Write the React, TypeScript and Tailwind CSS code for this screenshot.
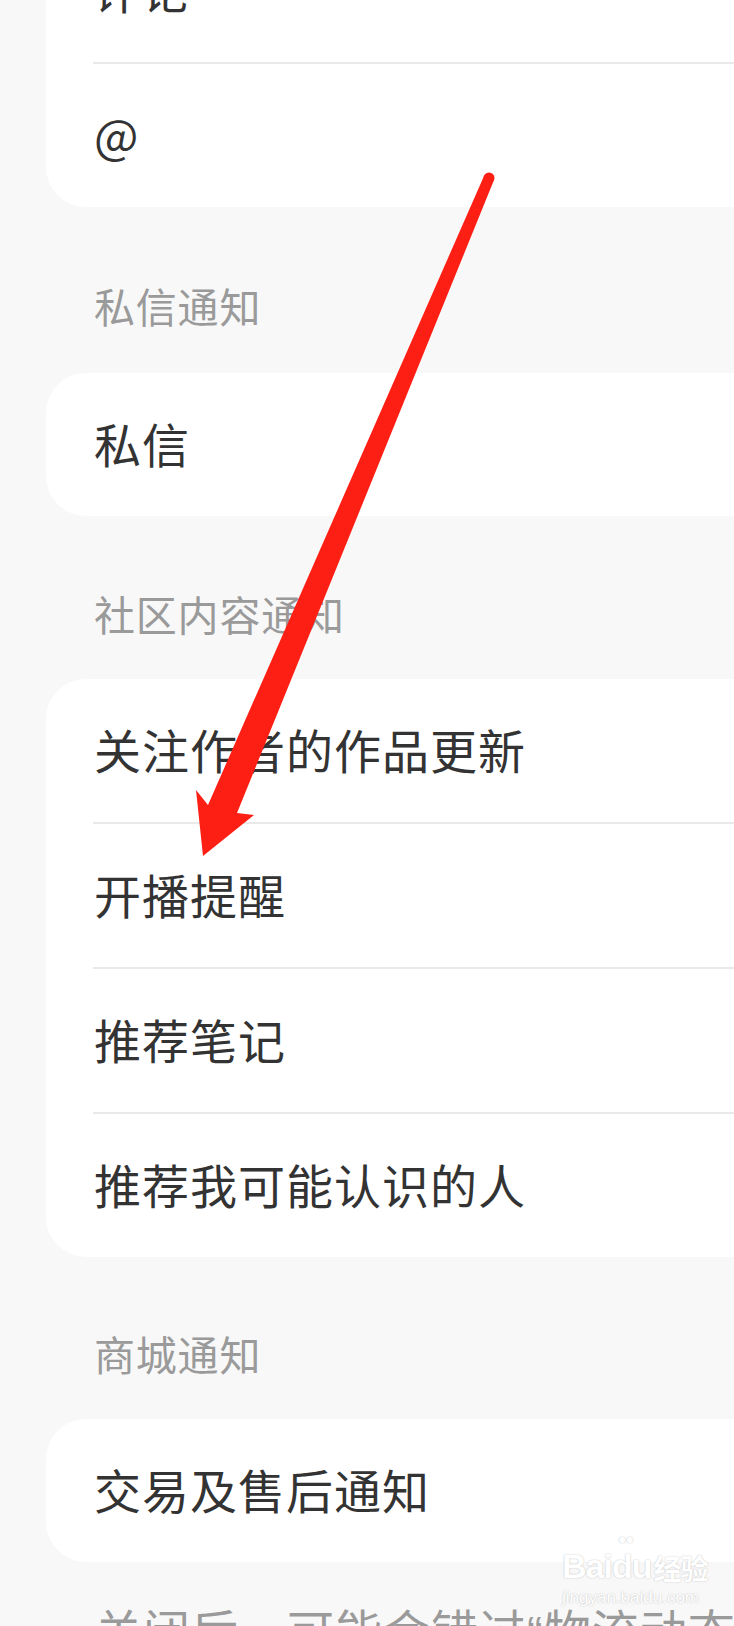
import React from "react"

const cjk = "font-['Noto_Sans_CJK_SC','Noto_Sans',sans-serif]"

function Row({label, last}: {label: string; last?: boolean}) {
    return (
        <>
            <div className="h-[143px] flex items-center pl-[48px]">
                <span className="text-[47px] leading-[60px] tracking-[1px] text-[#333333] -mt-[4px]">{label}</span>
            </div>
            {/* divider is inset, starts under the text */}
            {!last && <div className="ml-[47px] h-[2px] bg-[#e9e9e9]" />}
        </>
    )
}

function Card({items, className = ""}: {items: string[]; className?: string}) {
    return (
        <div className={`ml-[46px] bg-white rounded-l-[40px] ${className}`}>
            {items.map((item, i) => (
                <Row key={item} label={item} last={i === items.length - 1} />
            ))}
        </div>
    )
}

function SectionTitle({title, pt, pb}: {title: string; pt: string; pb: string}) {
    return (
        <div className={`pl-[94px] ${pt} ${pb}`}>
            <div className="text-[41px] leading-[56px] tracking-[0.8px] text-[#9a9a9a]">{title}</div>
        </div>
    )
}

// red annotation arrow drawn over the screenshot
function Arrow() {
    return (
        <svg
            className="absolute left-0 top-0 pointer-events-none"
            width="734"
            height="1626"
            viewBox="0 0 734 1626"
        >
            <polygon
                fill="#fe1f14"
                points="484,176 494,180 237,813 254,815 203,856 196,790 208,805"
            />
            <circle cx="489" cy="178" r="5.5" fill="#fe1f14" />
        </svg>
    )
}

function Watermark() {
    return (
        <div className="absolute left-[562px] top-[1546px] flex flex-col items-start pointer-events-none text-white [text-shadow:0_0_1.5px_#b5b5b5]">
            <div className="flex items-end font-['Liberation_Sans',sans-serif] text-[34px] leading-[40px] font-bold tracking-[-1px]">
                <span>Bai</span>
                <span className="relative">
                    du
                    <span className="absolute left-[6px] -top-[14px] text-[14px] leading-[14px]">●●</span>
                </span>
                <span className={`${cjk} text-[28px] leading-[36px] ml-[2px]`}>经验</span>
            </div>
            <div className="font-['Liberation_Sans',sans-serif] text-[17px] leading-[18px] mt-[3px]">jingyan.baidu.com</div>
        </div>
    )
}

export default function App() {
    return (
        <div className={`relative w-full h-[1626px] overflow-hidden bg-[#f8f8f8] ${cjk}`}>
            {/* top card, scrolled partly off screen */}
            <Card items={["评论", "@"]} className="-mt-[81px]" />

            <SectionTitle title="私信通知" pt="pt-[70px]" pb="pb-[40px]" />
            <Card items={["私信"]} />

            <SectionTitle title="社区内容通知" pt="pt-[69px]" pb="pb-[38px]" />
            <Card items={["关注作者的作品更新", "开播提醒", "推荐笔记", "推荐我可能认识的人"]} />

            <SectionTitle title="商城通知" pt="pt-[68px]" pb="pb-[38px]" />
            <Card items={["交易及售后通知"]} />

            <div className="pl-[95px] pt-[37px] whitespace-nowrap text-[47px] leading-[60px] tracking-[1px] text-[#9a9a9a]">
                关闭后，可能会错过<span className="font-['Liberation_Sans',sans-serif]">“</span>物流动态<span className="font-['Liberation_Sans',sans-serif]">”</span>等通知
            </div>

            <Watermark />
            <Arrow />
        </div>
    )
}
